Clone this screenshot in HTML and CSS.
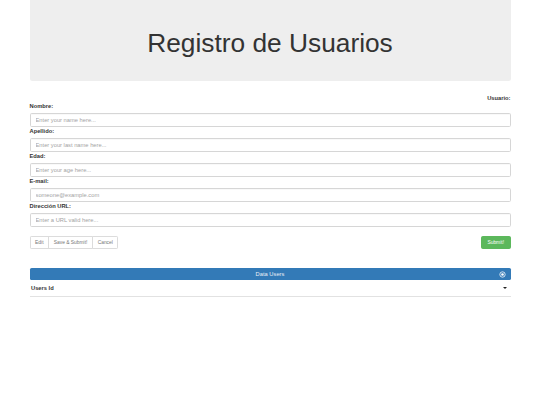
FILE: index.html
```html
<!DOCTYPE html>
<html lang="es">
<head>
<meta charset="utf-8">
<title>Registro de Usuarios</title>
<link rel="stylesheet" href="styles.css">
</head>
<body>
<div class="container">
  <div class="jumbotron">
    <h1 class="title">Registro de Usuarios</h1>
  </div>

  <div class="user-label">Usuario:</div>

  <form class="form">
    <label class="field-label" for="nombre">Nombre:</label>
    <input class="field-input" id="nombre" type="text" placeholder="Enter your name here...">

    <label class="field-label" for="apellido">Apellido:</label>
    <input class="field-input" id="apellido" type="text" placeholder="Enter your last name here...">

    <label class="field-label" for="edad">Edad:</label>
    <input class="field-input" id="edad" type="text" placeholder="Enter your age here...">

    <label class="field-label" for="email">E-mail:</label>
    <input class="field-input" id="email" type="text" placeholder="someone@example.com">

    <label class="field-label" for="url">Dirección URL:</label>
    <input class="field-input" id="url" type="text" placeholder="Enter a URL valid here...">

    <div class="actions">
      <div class="btn-group">
        <button type="button" class="btn btn-default">Edit</button>
        <button type="button" class="btn btn-default">Save &amp; Submit!</button>
        <button type="button" class="btn btn-default">Cancel</button>
      </div>
      <button type="button" class="btn btn-success">Submit!</button>
    </div>
  </form>

  <div class="panel">
    <div class="panel-heading">
      <span></span>
      <span class="panel-title">Data Users</span>
      <svg class="panel-icon" width="7" height="7" viewBox="0 0 14 14" aria-hidden="true">
        <circle cx="7" cy="7" r="5.4" fill="none" stroke="#fff" stroke-width="1.5"/>
        <circle cx="7" cy="7" r="2.6" fill="#fff"/>
      </svg>
    </div>
    <div class="table-row">
      <span class="th">Users Id</span>
      <span class="caret"></span>
    </div>
  </div>
</div>
</body>
</html>
```

FILE: styles.css
```css
html, body {
  margin: 0;
  padding: 0;
  background: #fff;
}

body {
  font-family: "Liberation Sans", Arial, Helvetica, sans-serif;
  font-size: 5.75px;
  line-height: 8.2px;
  color: #333;
}

.container {
  width: 481px;
  margin: 0 auto;
}

.jumbotron {
  background: #eee;
  border-radius: 0 0 2.5px 2.5px;
  padding: 20.5px 25px 20px;
  text-align: center;
  margin-bottom: 13px;
}

.title {
  margin: 8px 0 4px;
  font-size: 26.3px;
  line-height: 28.5px;
  font-weight: normal;
  color: #333;
}

.user-label {
  text-align: right;
  font-weight: bold;
  line-height: 8.2px;
}

.form {
  display: flex;
  flex-direction: column;
  margin: 0;
}

.field-label {
  display: block;
  font-weight: bold;
  line-height: 8px;
  margin-bottom: 3px;
}

.field-input {
  display: block;
  box-sizing: border-box;
  width: 100%;
  height: 14px;
  margin: 0;
  padding: 2px 5px;
  border: 1px solid #d6d6d6;
  border-radius: 1.6px;
  box-shadow: inset 0 0.4px 0.4px rgba(0, 0, 0, 0.05);
  font-family: inherit;
  font-size: 5.75px;
  color: #555;
  background: #fff;
}

.field-input::placeholder {
  color: #a3a3a3;
}

.actions {
  display: flex;
  justify-content: space-between;
  align-items: center;
  margin-top: 9px;
}

.btn-group {
  display: flex;
}

.btn {
  box-sizing: border-box;
  height: 13px;
  margin: 0;
  padding: 2px 4.6px;
  font-family: inherit;
  font-size: 4.9px;
  line-height: 7px;
  border: 1px solid #dcdcdc;
  border-radius: 1.2px;
  cursor: pointer;
}

.btn-default {
  background: #fff;
  color: #777;
}

.btn-group .btn {
  border-radius: 0;
}

.btn-group .btn + .btn {
  margin-left: -1px;
}

.btn-group .btn:first-child {
  border-radius: 1.2px 0 0 1.2px;
}

.btn-group .btn:last-child {
  border-radius: 0 1.2px 1.2px 0;
}

.btn-success {
  background: #5cb85c;
  border-color: #5cb85c;
  color: #fff;
  padding: 2px 5.5px;
  border-radius: 1.6px;
}

.panel {
  margin-top: 19px;
}

.panel-heading {
  display: grid;
  grid-template-columns: 1fr auto 1fr;
  align-items: center;
  height: 12px;
  box-sizing: border-box;
  padding: 0 5px;
  background: #337ab7;
  border-radius: 1.6px;
  color: #fff;
}

.panel-title {
  font-size: 5.75px;
  line-height: 8px;
  color: #e8eef6;
}

.panel-icon {
  justify-self: end;
  display: block;
}

.table-row {
  display: flex;
  justify-content: space-between;
  align-items: center;
  padding: 4px 3px 4px 1.5px;
  border-bottom: 1px solid #e2e2e2;
}

.th {
  font-weight: bold;
  line-height: 8.2px;
}

.caret {
  width: 0;
  height: 0;
  border-left: 2.5px solid transparent;
  border-right: 2.5px solid transparent;
  border-top: 2.5px solid #222;
  margin-right: 0.5px;
}
```
